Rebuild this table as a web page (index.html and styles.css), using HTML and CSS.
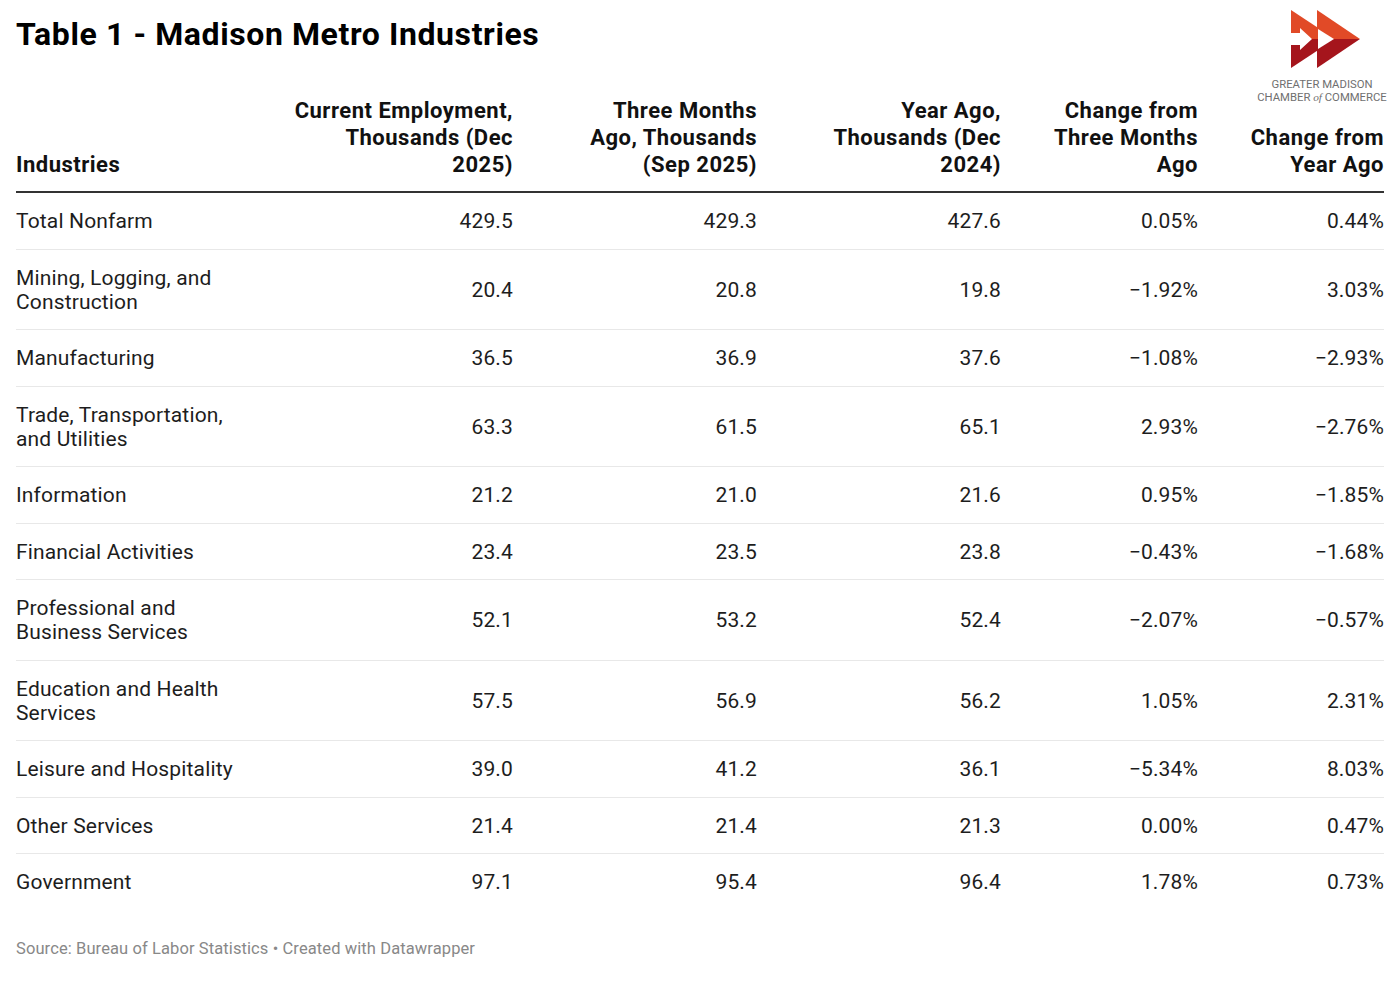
FILE: index.html
```html
<!DOCTYPE html>
<html lang="en">
<head>
<meta charset="utf-8">
<title>Table 1 - Madison Metro Industries</title>
<link rel="stylesheet" href="styles.css">
</head>
<body>
<div class="page">
  <h1 class="title">Table 1 - Madison Metro Industries</h1>
  <div class="logo">
    <svg class="logo-mark" width="70" height="58" viewBox="0 0 70 58" aria-hidden="true">
      <defs>
        <clipPath id="top"><rect x="0" y="0" width="70" height="29"/></clipPath>
        <clipPath id="bot"><rect x="0" y="29" width="70" height="29"/></clipPath>
      </defs>
      <g clip-path="url(#top)" fill="#e14a27">
        <polygon points="0,0 44,29 0,58"/>
        <polygon points="26,0 69,29 26,58"/>
      </g>
      <g clip-path="url(#bot)" fill="#a5151c">
        <polygon points="0,0 44,29 0,58"/>
        <polygon points="26,0 69,29 26,58"/>
      </g>
      <polygon fill="#fff" points="0,23 9,23 9,18 21,29 9,40 9,35 0,35"/>
      <polygon fill="#fff" points="27,19 43,29 27,39"/>
    </svg>
    <div class="logo-text">GREATER MADISON<br>CHAMBER <i>of</i> COMMERCE</div>
  </div>

  <table class="data">
    <colgroup>
      <col class="c1"><col class="c2"><col class="c3"><col class="c4"><col class="c5"><col class="c6">
    </colgroup>
    <thead>
      <tr>
        <th class="name">Industries</th>
        <th>Current Employment,<br>Thousands (Dec<br>2025)</th>
        <th>Three Months<br>Ago, Thousands<br>(Sep 2025)</th>
        <th>Year Ago,<br>Thousands (Dec<br>2024)</th>
        <th>Change from<br>Three Months<br>Ago</th>
        <th>Change from<br>Year Ago</th>
      </tr>
    </thead>
    <tbody>
      <tr><td class="name">Total Nonfarm</td><td>429.5</td><td>429.3</td><td>427.6</td><td>0.05%</td><td>0.44%</td></tr>
      <tr><td class="name">Mining, Logging, and Construction</td><td>20.4</td><td>20.8</td><td>19.8</td><td>−1.92%</td><td>3.03%</td></tr>
      <tr><td class="name">Manufacturing</td><td>36.5</td><td>36.9</td><td>37.6</td><td>−1.08%</td><td>−2.93%</td></tr>
      <tr><td class="name">Trade, Transportation, and Utilities</td><td>63.3</td><td>61.5</td><td>65.1</td><td>2.93%</td><td>−2.76%</td></tr>
      <tr><td class="name">Information</td><td>21.2</td><td>21.0</td><td>21.6</td><td>0.95%</td><td>−1.85%</td></tr>
      <tr><td class="name">Financial Activities</td><td>23.4</td><td>23.5</td><td>23.8</td><td>−0.43%</td><td>−1.68%</td></tr>
      <tr><td class="name">Professional and Business Services</td><td>52.1</td><td>53.2</td><td>52.4</td><td>−2.07%</td><td>−0.57%</td></tr>
      <tr><td class="name">Education and Health Services</td><td>57.5</td><td>56.9</td><td>56.2</td><td>1.05%</td><td>2.31%</td></tr>
      <tr><td class="name">Leisure and Hospitality</td><td>39.0</td><td>41.2</td><td>36.1</td><td>−5.34%</td><td>8.03%</td></tr>
      <tr><td class="name">Other Services</td><td>21.4</td><td>21.4</td><td>21.3</td><td>0.00%</td><td>0.47%</td></tr>
      <tr><td class="name">Government</td><td>97.1</td><td>95.4</td><td>96.4</td><td>1.78%</td><td>0.73%</td></tr>
    </tbody>
  </table>

  <p class="source">Source: Bureau of Labor Statistics • Created with Datawrapper</p>
</div>
</body>
</html>
```

FILE: styles.css
```css
* { box-sizing: border-box; }

html, body {
  margin: 0;
  padding: 0;
  background: #ffffff;
}

body {
  font-family: Roboto, "Liberation Sans", sans-serif;
  color: #1d1d1d;
}

.page {
  position: relative;
  width: 1400px;
  padding: 15px 16px 0;
}

.title {
  margin: 0;
  font-size: 32px;
  line-height: 38px;
  font-weight: 700;
  letter-spacing: 0.6px;
  color: #000;
}

.logo {
  position: absolute;
  top: 10px;
  right: 8px;
  width: 140px;
  text-align: center;
}

.logo-mark {
  display: block;
  margin: 0 0 0 39px;
}

.logo-text {
  margin-top: 11px;
  font-size: 11.3px;
  line-height: 12px;
  color: #6f6f6f;
}

.logo-text i {
  font-family: "Liberation Serif", serif;
  font-style: italic;
}

.data {
  margin-top: 43.5px;
  width: 1368px;
  border-collapse: collapse;
  table-layout: fixed;
}

.c1 { width: 250px; }
.c2 { width: 247px; }
.c3 { width: 244px; }
.c4 { width: 244px; }
.c5 { width: 197px; }
.c6 { width: 186px; }

.data th {
  font-size: 22px;
  line-height: 27px;
  font-weight: 700;
  letter-spacing: 0.5px;
  color: #111;
  text-align: right;
  vertical-align: bottom;
  padding: 0 0 13.5px;
  border-bottom: 2px solid #333;
}

.data td {
  font-size: 21px;
  line-height: 24px;
  letter-spacing: 0.15px;
  text-align: right;
  vertical-align: middle;
  padding: 16px 0 15.5px;
  border-bottom: 1px solid #e8e8e8;
  font-variant-numeric: tabular-nums;
}

.data tbody tr:last-child td {
  border-bottom: none;
}

.data th.name,
.data td.name {
  text-align: left;
  padding-right: 10px;
}

.source {
  margin: 29px 0 0;
  font-size: 16.5px;
  line-height: 20px;
  letter-spacing: 0.1px;
  color: #888;
}
```
